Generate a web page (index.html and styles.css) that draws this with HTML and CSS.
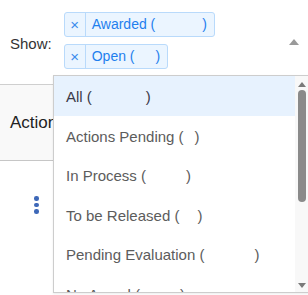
FILE: index.html
```html
<!DOCTYPE html>
<html lang="en">
<head>
    <meta charset="UTF-8">
    <meta name="viewport" content="width=device-width, initial-scale=1.0">
    <title>Show filter</title>
    <link rel="stylesheet" href="styles.css">
</head>
<body>
    <div class="page">
        <!-- filter bar -->
        <div class="filter-bar">
            <span class="filter-label">Show:</span>
            <div class="tags">
                <span class="tag"><span class="tag-remove">×</span><span class="tag-text">Awarded (<span class="count count-awarded"></span>)</span></span>
                <span class="tag"><span class="tag-remove">×</span><span class="tag-text">Open (<span class="count count-open"></span>)</span></span>
            </div>
            <span class="caret"></span>
        </div>

        <div class="table-head">Actions</div>
        <div class="table-row">
            <span class="kebab"><i></i><i></i><i></i></span>
        </div>

        <!-- open dropdown -->
        <div class="dropdown">
            <ul class="options">
                <li class="option active">All (<span class="count count-all"></span>)</li>
                <li class="option">Actions Pending (<span class="count count-pending"></span>)</li>
                <li class="option">In Process (<span class="count count-process"></span>)</li>
                <li class="option">To be Released (<span class="count count-release"></span>)</li>
                <li class="option">Pending Evaluation (<span class="count count-eval"></span>)</li>
                <li class="option">No Award (<span class="count count-noaward"></span>)</li>
            </ul>
            <div class="scrollbar">
                <span class="arrow-up"></span>
                <span class="thumb"></span>
                <span class="arrow-down"></span>
            </div>
        </div>
    </div>
</body>
</html>
```

FILE: styles.css
```css
body {
    margin: 0;
    background: #fff;
    font-family: 'Liberation Sans', Arial, sans-serif;
    color: #333;
    overflow: hidden;
}

.page {
    position: relative;
    height: 295px;
}

.filter-bar {
    display: flex;
    align-items: center;
    padding: 12px 9px 0 10px;
}

.filter-label {
    font-size: 15px;
    margin-right: 12px;
    padding-top: 6px;
}

.tags {
    display: flex;
    flex-direction: column;
    align-items: flex-start;
    gap: 7px;
}

.tag {
    display: flex;
    height: 25px;
    box-sizing: border-box;
    border: 1px solid #b9dafb;
    border-radius: 3px;
    background: #ebf5ff;
    color: #1f7fee;
    font-size: 14px;
    line-height: 23px;
}

.tag-remove {
    width: 20px;
    text-align: center;
    border-right: 1px solid #b9dafb;
    font-size: 15px;
    color: #3a8bec;
}

.tag-text {
    padding: 0 7px 0 6px;
}

.count {
    display: inline-block;
}

.count-awarded { width: 47px; }
.count-open { width: 21px; }
.count-all { width: 54px; }
.count-pending { width: 11px; }
.count-process { width: 40px; }
.count-release { width: 18px; }
.count-eval { width: 50px; }
.count-noaward { width: 40px; }

.caret {
    margin-left: auto;
    width: 0;
    height: 0;
    border-left: 5px solid transparent;
    border-right: 5px solid transparent;
    border-bottom: 6px solid #9a9a9a;
    margin-top: 3px;
}

.table-head {
    margin-top: 15px;
    height: 74px;
    display: flex;
    align-items: center;
    padding-left: 10px;
    padding-top: 1px;
    background: #f9f9f9;
    border-top: 1px solid #cfcfcf;
    border-bottom: 1px solid #c6c6c6;
    font-size: 17px;
    color: #222;
}

.table-row {
    height: 88px;
    display: flex;
    align-items: center;
    padding-left: 34px;
}

.kebab {
    display: flex;
    flex-direction: column;
    gap: 2px;
}

.kebab i {
    width: 4.5px;
    height: 4.5px;
    border-radius: 50%;
    background: #3e68b8;
}

.dropdown {
    position: absolute;
    top: 75px;
    left: 53px;
    width: 256px;
    height: 218px;
    box-sizing: border-box;
    display: flex;
    background: #fff;
    border: 1px solid #cdcdcd;
    box-shadow: 0 1px 2px rgba(0, 0, 0, 0.08);
}

.options {
    flex: 1;
    list-style: none;
    margin: 0;
    padding: 0;
    overflow: hidden;
}

.option {
    padding: 11px 12px 9px;
    line-height: 19.6px;
    font-size: 15px;
    color: #5c5c5c;
    white-space: nowrap;
}

.option.active {
    background: #e7f2fe;
    color: #3a3a48;
}

.scrollbar {
    width: 13px;
    flex-shrink: 0;
    display: flex;
    flex-direction: column;
    align-items: center;
    background: #f8f8f8;
}

.arrow-up,
.arrow-down {
    width: 0;
    height: 0;
    border-left: 4px solid transparent;
    border-right: 4px solid transparent;
}

.arrow-up {
    margin-top: 6px;
    border-bottom: 5px solid #7a7a7a;
}

.thumb {
    margin-top: 3px;
    width: 8px;
    height: 112px;
    border-radius: 4px;
    background: #8a8a8a;
}

.arrow-down {
    margin-top: auto;
    margin-bottom: 4px;
    border-top: 5px solid #7a7a7a;
}
```
